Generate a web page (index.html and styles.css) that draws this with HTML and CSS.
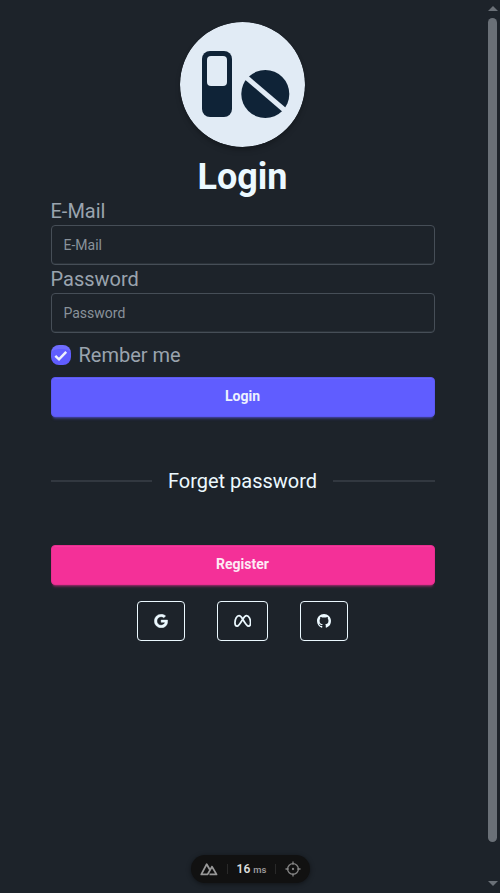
FILE: index.html
```html
<!DOCTYPE html>
<html lang="en">
<head>
<meta charset="utf-8">
<title>Login</title>
<link rel="stylesheet" href="styles.css">
</head>
<body>
<div class="page">
  <main class="login">
    <svg class="logo" viewBox="0 0 125 125" aria-hidden="true">
      <circle cx="62.500" cy="62.500" r="62.500" fill="#e1ebf5"/>
      <rect x="22" y="29" width="30" height="66" rx="8" fill="#0f2337"/>
      <rect x="27" y="34" width="20" height="30" rx="4" fill="#e1ebf5"/>
      <circle cx="85.300" cy="72" r="24" fill="#0f2337"/>
      <path d="M63.500 53 108.500 91.500" stroke="#e1ebf5" stroke-width="5"/>
    </svg>
    <h1>Login</h1>
    <form class="form">
      <label class="label" for="email">E-Mail</label>
      <input class="input" id="email" type="email" placeholder="E-Mail">
      <label class="label" for="password">Password</label>
      <input class="input" id="password" type="password" placeholder="Password">
      <label class="remember">
        <span class="checkbox"><svg viewBox="0 0 20 20"><path d="m4.300 10.800 3.700 3.500 7.200-7.500" fill="none" stroke="#edf1fe" stroke-width="2.500"/></svg></span>
        Rember me
      </label>
      <button class="btn primary" type="button">Login</button>
    </form>
    <div class="divider">Forget password</div>
    <button class="btn secondary" type="button">Register</button>
    <div class="social">
      <button class="social-btn" type="button" aria-label="Google">
        <svg width="14" height="14" viewBox="0 0 488 512"><path fill="currentColor" stroke="currentColor" stroke-width="14" d="M488 261.800C488 403.300 391.100 504 248 504 110.800 504 0 393.200 0 256S110.800 8 248 8c66.800 0 123 24.500 166.300 64.900l-67.500 64.900C258.500 52.600 94.300 116.600 94.300 256c0 86.500 69.100 156.600 153.700 156.600 98.200 0 135-70.400 140.800-106.900H248v-85.300h236.100c2.300 12.700 3.900 24.900 3.900 41.400z"/></svg>
      </button>
      <button class="social-btn" type="button" aria-label="Meta">
        <svg width="17.500" height="14" viewBox="0 0 17.500 14"><path d="M8.750 5.300C7.500 3.100 6.500 1.700 5 1.700 2.700 1.700.950 5.200.950 8.800c0 2.100.8 3.400 2.200 3.400 1.500 0 2.500-1.600 5.600-6.900 1.200-2 2.200-3.600 3.800-3.600 2.300 0 4.050 3.500 4.050 7.100 0 2.100-.8 3.400-2.200 3.400-1.500 0-2.500-1.500-5.650-6.900Z" fill="none" stroke="currentColor" stroke-width="1.750"/></svg>
      </button>
      <button class="social-btn" type="button" aria-label="GitHub">
        <svg width="14" height="14" viewBox="0 0 16 16"><path fill="currentColor" d="M8 0C3.580 0 0 3.580 0 8c0 3.540 2.290 6.530 5.470 7.590.4.070.55-.17.55-.38 0-.19-.01-.82-.01-1.490-2.010.37-2.530-.49-2.690-.94-.09-.23-.48-.94-.82-1.130-.28-.15-.68-.52-.01-.53.63-.01 1.080.58 1.230.82.72 1.210 1.870.87 2.330.66.07-.52.28-.87.510-1.070-1.780-.2-3.640-.89-3.640-3.950 0-.87.310-1.590.82-2.150-.08-.2-.36-1.020.08-2.120 0 0 .67-.21 2.200.82.64-.18 1.320-.27 2-.27s1.360.09 2 .27c1.530-1.040 2.200-.82 2.200-.82.44 1.100.16 1.920.08 2.120.51.56.82 1.270.82 2.150 0 3.070-1.870 3.750-3.650 3.950.29.25.54.73.54 1.480 0 1.070-.01 1.930-.01 2.200 0 .21.15.46.55.38A8.010 8.010 0 0 0 16 8c0-4.420-3.580-8-8-8Z"/></svg>
      </button>
    </div>
  </main>
</div>
<div class="scrollbar"><i class="arrow up"></i><i class="thumb"></i><i class="arrow down"></i></div>
<div class="devtools">
  <svg width="18" height="14" viewBox="0 0 18 14"><path d="M9.500 12.400H16.500L12 4.600 7.600 12.400H1.300L6.700 2.200 9.600 7.300" fill="none" stroke="#989898" stroke-width="1.800" stroke-linejoin="round"/></svg>
  <i class="sep"></i>
  <span class="time">16 <small>ms</small></span>
  <i class="sep"></i>
  <svg width="16" height="16" viewBox="0 0 16 16" fill="none" stroke="#858585" stroke-width="1.300"><circle cx="8" cy="8" r="5.400"/><path d="M8 .5v3.200M8 12.300v3.200M.5 8h3.200M12.300 8h3.200"/><circle cx="8" cy="8" r=".5"/></svg>
</div>
</body>
</html>
```

FILE: styles.css
```css
* { box-sizing: border-box; }
body {
  margin: 0;
  height: 893px;
  overflow: hidden;
  display: flex;
  background: #1d232a;
  color: #ecf9ff;
  font-family: Roboto, sans-serif;
  font-size: 20px;
  line-height: 28px;
}
.page {
  width: 485px;
  display: flex;
  justify-content: center;
  align-items: flex-start;
}
.login {
  width: 384px;
  padding-top: 22px;
  display: flex;
  flex-direction: column;
}
.logo {
  width: 125px;
  height: 125px;
  align-self: center;
  border-radius: 50%;
  box-shadow: 0 4px 6px -1px #0003, 0 2px 4px -2px #0003;
}
h1 {
  margin: 10px 0 0;
  font-size: 36px;
  line-height: 40px;
  font-weight: 700;
  text-align: center;
}
.form { display: flex; flex-direction: column; }
.label, .remember { color: #9aa3ae; }
.input {
  width: 100%;
  height: 40px;
  padding: 0 12px;
  border: 1px solid #464e57;
  border-radius: 4px;
  background: #1d232a;
  color: #ecf9ff;
  font: 14px Roboto, sans-serif;
  box-shadow: 0 -1px #2a3138 inset;
}
.input::placeholder { color: #89929a; opacity: 1; }
.remember {
  display: flex;
  align-items: center;
  gap: 8px;
  margin: 8px 0;
}
.checkbox {
  width: 20px;
  height: 20px;
  border-radius: 8px;
  background: #605dff;
  box-shadow: 0 8px 0 -4px #ffffff1a inset;
}
.checkbox svg { display: block; }
.btn {
  height: 40px;
  border: 1px solid;
  border-radius: 4px;
  padding: 0 16px 2px;
  font: 700 14px Roboto, sans-serif;
}
.primary {
  background: #605dff;
  border-color: #5b58f2;
  color: #edf1fe;
  box-shadow: 0 1px #6966ff inset, 0 3px 2px -2px #605dff70, 0 4px 3px -2px #605dff40;
}
.secondary {
  background: #f43098;
  border-color: #e82e90;
  color: #fdeaf5;
  box-shadow: 0 1px #f53b9e inset, 0 3px 2px -2px #f4309870, 0 4px 3px -2px #f4309840;
}
.divider {
  height: 16px;
  margin: 56px 0;
  display: flex;
  align-items: center;
  gap: 16px;
  white-space: nowrap;
}
.divider::before, .divider::after {
  content: "";
  flex: 1;
  height: 2px;
  background: #323840;
}
.social {
  margin-top: 16px;
  display: flex;
  justify-content: center;
  gap: 32px;
}
.social-btn {
  height: 40px;
  padding: 0 16px;
  border: 1px solid #ecf9ff;
  border-radius: 4px;
  background: none;
  color: #ecf9ff;
  display: flex;
  align-items: center;
}
.scrollbar {
  width: 15px;
  padding: 6px 0 7px;
  display: flex;
  flex-direction: column;
  align-items: center;
}
.thumb {
  width: 9px;
  height: 824px;
  margin: 7px 0 39px;
  border-radius: 5px;
  background: #6a7077;
}
.arrow {
  border: 5px solid transparent;
  flex: none;
}
.up { border-top: 0; border-bottom: 5px solid #6a7077; }
.down { border-bottom: 0; border-top: 5px solid #6a7077; }
.devtools {
  position: absolute;
  left: 191px;
  top: 855px;
  width: 119px;
  height: 28px;
  padding: 0 9px;
  border-radius: 14px;
  background: #111;
  box-shadow: 0 1px 5px #0007;
  display: flex;
  align-items: center;
  justify-content: space-between;
}
.sep { width: 1px; height: 10px; background: #292929; }
.time {
  color: #ddd;
  font: 600 12px/28px Roboto, sans-serif;
}
.time small { color: #999; font-size: 9.500px; }
```
